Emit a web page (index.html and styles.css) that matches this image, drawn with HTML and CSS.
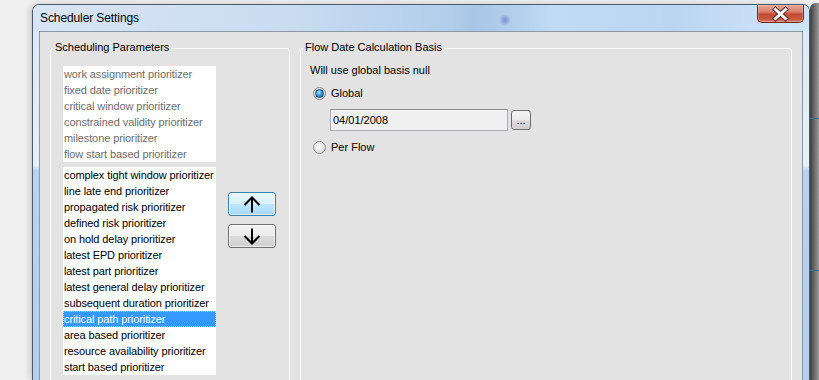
FILE: index.html
```html
<!DOCTYPE html>
<html lang="en">
<head>
    <meta charset="UTF-8">
    <title>Scheduler Settings</title>
    <link rel="stylesheet" href="styles.css">
</head>
<body>
    <div class="screen">
        <div class="window">
            <div class="titlebar">
                <span class="title">Scheduler Settings</span>
                <button class="close-btn" title="Close">
                    <svg width="45" height="16" viewBox="0 0 45 16">
                        <path d="M17.5 3.5 L27.5 12.5 M27.5 3.5 L17.5 12.5" stroke="#5a2a22" stroke-width="5" stroke-linecap="square" fill="none"/>
                        <path d="M17.5 3.5 L27.5 12.5 M27.5 3.5 L17.5 12.5" stroke="#fff" stroke-width="3" stroke-linecap="square" fill="none"/>
                    </svg>
                </button>
            </div>

            <div class="client">
                <fieldset class="group group-params">
                    <legend>Scheduling Parameters</legend>
                    <div class="params">
                        <div class="lists">
                            <ul class="list list-disabled">
                                <li>work assignment prioritizer</li>
                                <li>fixed date prioritizer</li>
                                <li>critical window prioritizer</li>
                                <li>constrained validity prioritizer</li>
                                <li>milestone prioritizer</li>
                                <li>flow start based prioritizer</li>
                            </ul>
                            <ul class="list list-active">
                                <li>complex tight window prioritizer</li>
                                <li>line late end prioritizer</li>
                                <li>propagated risk prioritizer</li>
                                <li>defined risk prioritizer</li>
                                <li>on hold delay prioritizer</li>
                                <li>latest EPD prioritizer</li>
                                <li>latest part prioritizer</li>
                                <li>latest general delay prioritizer</li>
                                <li>subsequent duration prioritizer</li>
                                <li class="selected">critical path prioritizer</li>
                                <li>area based prioritizer</li>
                                <li>resource availability prioritizer</li>
                                <li>start based prioritizer</li>
                            </ul>
                        </div>
                        <div class="move-btns">
                            <button class="move-btn hover" title="Move up">
                                <svg width="18" height="17" viewBox="0 0 18 17">
                                    <path d="M9 1.5 V16.5 M1.5 9 L9 1.5 L16.5 9" stroke="#000" stroke-width="2" fill="none"/>
                                </svg>
                            </button>
                            <button class="move-btn" title="Move down">
                                <svg width="18" height="17" viewBox="0 0 18 17">
                                    <path d="M9 0.5 V15.5 M1.5 8 L9 15.5 L16.5 8" stroke="#000" stroke-width="2" fill="none"/>
                                </svg>
                            </button>
                        </div>
                    </div>
                </fieldset>

                <fieldset class="group group-basis">
                    <legend>Flow Date Calculation Basis</legend>
                    <div class="basis">
                        <p class="note">Will use global basis null</p>
                        <label class="radio-row"><span class="radio checked"></span>Global</label>
                        <div class="date-row">
                            <input class="date-input" type="text" value="04/01/2008">
                            <button class="browse-btn">...</button>
                        </div>
                        <label class="radio-row"><span class="radio"></span>Per Flow</label>
                    </div>
                </fieldset>
            </div>
        </div>
        <div class="backdrop"></div>
    </div>
</body>
</html>
```

FILE: styles.css
```css
* {
    margin: 0;
    padding: 0;
    box-sizing: border-box;
}

body {
    font-family: 'Liberation Sans', Arial, sans-serif;
    font-size: 11px;
    color: #000;
    background: #f0f0f0;
    overflow: hidden;
}

.screen {
    display: flex;
    height: 380px;
    overflow: hidden;
}

/* window frame */
.window {
    margin: 4px 0 0 32px;
    width: 778px;
    flex-shrink: 0;
    border: 1px solid #4c5b6b;
    border-bottom: none;
    border-radius: 7px 7px 0 0;
    padding: 0 6px;
    display: flex;
    flex-direction: column;
    background: linear-gradient(to bottom, #dce8f6 0, #e6f0fb 160px, #b7d3f0 166px, #b3d0ee 100%);
    box-shadow: -2px 0 6px rgba(0, 0, 0, 0.18);
}

.titlebar {
    height: 26px;
    margin: 0 -6px;
    padding: 0 5px 0 7px;
    display: flex;
    align-items: flex-start;
    border-radius: 6px 6px 0 0;
    background:
        radial-gradient(circle at 472px 15px, rgba(80, 95, 200, 0.6) 0, rgba(80, 95, 200, 0) 6px),
        linear-gradient(to right, #d8e5f4 0, #c9dcf1 260px, #b2cdea 420px, #a8c5e6 440px, #b6d1ed 490px, #c2dbf4 520px, #bcd6f1 640px, #cfe3f7 760px);
}

.title {
    line-height: 26px;
    font-size: 12px;
    letter-spacing: -0.1px;
}

.close-btn {
    margin-left: auto;
    width: 47px;
    height: 18px;
    border: 1px solid #6a2d22;
    border-top: none;
    border-radius: 0 0 5px 5px;
    background: linear-gradient(to bottom, #e8a899 0, #d7806b 40%, #c24a31 55%, #c95c44 85%, #d8836c 100%);
    display: flex;
    align-items: center;
    justify-content: center;
    box-shadow: inset 0 0 0 1px rgba(255, 200, 190, 0.35);
}

.client {
    flex: 1;
    min-height: 0;
    overflow: hidden;
    border: 1px solid #8a99a9;
    border-bottom: none;
    background: #e3e3e3;
    display: flex;
    align-items: flex-start;
    gap: 10px;
    padding: 9px 10px 0;
}

/* group boxes */
.group {
    height: 360px;
    border: 1px solid #fcfcfc;
    border-radius: 3px;
    min-width: 0;
}

.group legend {
    margin-left: 2px;
    padding: 0 2px 3px;
    line-height: 12px;
}

.group-params {
    width: 240px;
    flex-shrink: 0;
}

.group-basis {
    flex: 1;
}

.params {
    display: flex;
    padding: 10px 0 0 12px;
}

.lists {
    width: 153px;
}

.list {
    list-style: none;
    background: #fff;
}

.list li {
    height: 16px;
    line-height: 16px;
    padding-left: 1px;
    white-space: nowrap;
    letter-spacing: -0.1px;
}

.list-disabled li {
    color: #6d6d6d;
}

.list-active {
    margin-top: 5px;
}

.list li.selected {
    background: #3399ff;
    color: #fff;
    outline: 1px dotted #a9d1ff;
    outline-offset: -1px;
}

.move-btns {
    margin-left: 12px;
    padding-top: 126px;
    display: flex;
    flex-direction: column;
    gap: 8px;
}

.move-btn {
    width: 48px;
    height: 24px;
    border: 1px solid #707070;
    border-radius: 3px;
    background: linear-gradient(to bottom, #f2f2f2 0, #ebebeb 50%, #dddddd 50%, #cfcfcf 100%);
    display: flex;
    align-items: center;
    justify-content: center;
    box-shadow: inset 0 0 0 1px rgba(255, 255, 255, 0.6);
}

.move-btn.hover {
    border-color: #3c7fb1;
    background: linear-gradient(to bottom, #eaf6fd 0, #d9f0fc 50%, #bee6fd 50%, #a7d9f5 100%);
}

/* flow date basis */
.basis {
    padding: 6px 0 0 9px;
}

.note {
    line-height: 16px;
}

.radio-row {
    display: flex;
    align-items: center;
    height: 16px;
    margin-top: 7px;
}

.radio {
    width: 13px;
    height: 13px;
    margin: 0 5px 0 3px;
    border: 1px solid #8b8b8b;
    border-radius: 50%;
    background: radial-gradient(circle at 40% 35%, #ffffff 0, #e8e8e8 45%, #c9c9c9 100%);
    display: flex;
    align-items: center;
    justify-content: center;
}

.radio.checked::after {
    content: '';
    width: 7px;
    height: 7px;
    border-radius: 50%;
    border: 1px solid #1b4f7e;
    background: radial-gradient(circle at 40% 35%, #b6e4ff 0, #3a9ce0 45%, #155aa5 100%);
}

.date-row {
    display: flex;
    align-items: center;
    margin: 8px 0 0 20px;
}

.date-input {
    width: 178px;
    height: 22px;
    border: 1px solid #abadb3;
    border-top-color: #8e8f8f;
    background: #f0f0f0;
    font: inherit;
    padding-left: 2px;
    color: #000;
}

.browse-btn {
    width: 20px;
    height: 20px;
    margin-left: 3px;
    border: 1px solid #707070;
    border-radius: 3px;
    background: linear-gradient(to bottom, #f2f2f2 0, #ebebeb 50%, #dddddd 50%, #cfcfcf 100%);
    font: inherit;
    line-height: 14px;
    color: #000;
}

.date-row + .radio-row {
    margin-top: 8px;
}

/* what is behind the dialog */
.backdrop {
    flex: 1;
    margin-top: 3px;
    border-top-left-radius: 6px;
    background:
        linear-gradient(#2c7190, #2c7190) no-repeat 0 115px / 100% 1px,
        linear-gradient(#2c7190, #2c7190) no-repeat 0 267px / 100% 1px,
        linear-gradient(to right, #3e3e3e, #9a9a9a);
}
```
